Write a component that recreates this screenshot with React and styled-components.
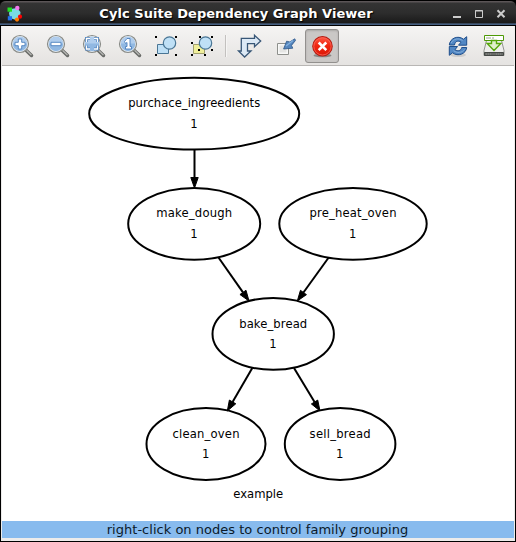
import React from 'react';
import styled, { createGlobalStyle, css } from 'styled-components';

const GlobalStyle = createGlobalStyle`
  body { margin: 0; background: #000; }
  * { box-sizing: border-box; }
`;

const Window = styled.div`
  width: 516px;
  height: 542px;
  display: flex;
  flex-direction: column;
  background: #000;
  font-family: 'DejaVu Sans', sans-serif;
  overflow: hidden;
`;

const TitleBar = styled.header`
  height: 26px;
  flex: none;
  display: flex;
  align-items: center;
  padding: 0 8px 0 6px;
  border-top: 1px solid #000;
  border-bottom: 1px solid #000;
  border-radius: 6px 6px 0 0;
  background: linear-gradient(#5b5557 0, #5b5557 1px, #343434 2px, #2d2d2d 12px, #1a1a1a 22px, #54739c 23px, #354965 24px);
`;

const Title = styled.h1`
  flex: 1;
  margin: 0;
  padding: 1px 6px 0 0;
  text-align: center;
  color: #fff;
  font-size: 13px;
  line-height: 20px;
  font-weight: bold;
  letter-spacing: 0.05px;
  white-space: nowrap;
  text-shadow: 1px 1px 1px #000;
`;

const Glyph = styled.svg`
  display: block;
  flex: none;
  overflow: visible;
`;

const Client = styled.div`
  flex: 1;
  min-height: 0;
  display: flex;
  flex-direction: column;
  margin: 0 1px 1px;
  border: solid #edeceb;
  border-width: 0 1px 3px 1px;
  background: #fff;
`;

const Toolbar = styled.nav`
  height: 40px;
  flex: none;
  display: flex;
  align-items: center;
  padding: 0 2px;
  background: linear-gradient(#f5f4f3, #e5e3e1);
  border-bottom: 1px solid #b8b6b4;
`;

const ToolButton = styled.button`
  width: 34px;
  height: 34px;
  margin: 0 1px;
  padding: 0;
  display: flex;
  align-items: center;
  justify-content: center;
  border: 1px solid transparent;
  border-radius: 3px;
  background: transparent;
  ${(p) => p.$pressed && css`
    border-color: #92908e;
    background: #cac8c6;
    box-shadow: inset 0 1px 2px #aaa8a6;
  `}
`;

const Separator = styled.div`
  width: 2px;
  height: 22px;
  margin: 0 5px;
  background: #c3c1bf;
  border-right: 1px solid #f6f5f4;
`;

const Spacer = styled.div`flex: 1;`;

const Canvas = styled.main`
  flex: 1;
  min-height: 0;
  background: #fff;
`;

const StatusBar = styled.footer`
  height: 17px;
  flex: none;
  background: #88bbee;
  color: #0b1a2a;
  text-align: center;
  font-size: 13px;
  line-height: 17px;
  letter-spacing: 0.02px;
  padding-right: 1px;
  white-space: nowrap;
`;

const AppIcon = () => (
  <Glyph width="18" height="18" viewBox="0 0 18 18">
    <path d="M5 5 11 4 14.500 8 14 13 10 16 4 14 3 9Z" fill="#79dce4" />
    <rect x="1.500" y="3.500" width="4.500" height="4.200" fill="#1fe01f" />
    <circle cx="11.300" cy="4" r="2.200" fill="#f37af0" />
    <circle cx="14" cy="12.700" r="2.100" fill="#f00" />
    <circle cx="11" cy="15.600" r="2.100" fill="#ff7b00" />
    <rect x="1.800" y="12.200" width="4.200" height="4.200" fill="#2272ee" />
  </Glyph>
);

const WindowControls = () => (
  <Glyph width="54" height="12" viewBox="0 0 54 12">
    <path d="M-1 10h8" stroke="#ccc" strokeWidth="2" />
    <path d="M21.500 3.500h7v7h-7zM21 4h8" fill="none" stroke="#ccc" />
    <path d="m43.500 3.300 7 7m0-7-7 7" stroke="#ccc" strokeWidth="2" />
  </Glyph>
);

const magnifierMarks = {
  in: <path d="M8.300 4.500h3.400v3.300H15v3.400h-3.300v3.300H8.300v-3.300H5V7.800h3.300z" />,
  out: <path d="M5 7.800h10v3.400H5z" />,
  fit: (
    <g fill="none">
      <path d="M4.500 7.500v-3.500H8M12 4h3.500v3.500M15.500 11v3.500H12M8 14.500H4.500V11" stroke="#4c80bd" strokeWidth="2.800" />
      <path d="M4.500 7.500v-3.500H8M12 4h3.500v3.500M15.500 11v3.500H12M8 14.500H4.500V11" stroke="#fff" strokeWidth="1.300" />
    </g>
  ),
  one: <path d="M6.500 7 9 4h3v8h1.500v2.500h-6V12H9V8L7.500 9z" />,
};

const Magnifier = ({ kind }) => (
  <Glyph width="24" height="24" viewBox="0 0 24 24">
    <path d="m16 16.300 5.500 5.200" stroke="#686a67" strokeWidth="3.500" strokeLinecap="round" />
    <path d="m16.500 16.300 5 4.800" stroke="#b9bab7" strokeWidth="1.300" />
    <circle cx="10" cy="10" r="8.500" fill="#e9f0f7" stroke="#898b87" strokeWidth="1.200" />
    <circle cx="10" cy="10" r="7.200" fill="#91b8e2" />
    <path d="M2.800 9.500a7.200 6.700 0 0 1 14.400 0z" fill="#b0cded" />
    <g transform="translate(0 .5)" fill="#fff" stroke="#4c80bd" strokeWidth=".9">{magnifierMarks[kind]}</g>
  </Glyph>
);

const corners = (points) => points.map(([x, y]) => (
  <rect key={`${x}-${y}`} x={x} y={y} width="2" height="2" fill="#000" />
));

const GroupIcon = () => (
  <Glyph width="24" height="24" viewBox="0 0 24 24">
    <path d="M3.500 10.500h11v9h-11z" fill="#bfe0f6" stroke="#4a7695" />
    <circle cx="15.500" cy="9" r="6.200" fill="#bfe0f6" stroke="#4a7695" strokeWidth="1.200" />
    {corners([[1, 2], [21, 2], [1, 20], [21, 20]])}
  </Glyph>
);

const UngroupIcon = () => (
  <Glyph width="24" height="24" viewBox="0 0 24 24">
    <path d="M3.500 10.500h11v9h-11z" fill="#f0ef9b" stroke="#a2a170" />
    <circle cx="15.500" cy="9" r="6.200" fill="#bfe0f6" stroke="#4a7695" strokeWidth="1.200" />
    {corners([[9, 2], [21, 2], [1, 8], [21, 15], [8, 15], [1, 20], [14, 20]])}
  </Glyph>
);

const BranchIcon = () => (
  <Glyph width="24" height="24" viewBox="0 0 24 24">
    <path d="M3.300 4.300h13.200V1.300l6.200 5.700-6.200 5.700v-3h-7V17H13l-6.400 6L.5 17h2.800z" fill="#dce9f5" stroke="#385777" strokeWidth="1.300" />
  </Glyph>
);

const ShrinkIcon = () => (
  <Glyph width="24" height="24" viewBox="0 0 24 24">
    <path d="M3.500 9.500h11v11h-11z" fill="#f8f8f7" stroke="#8e908c" />
    <path d="M5.500 11.500h7v7h-7z" fill="#e5e5e3" />
    <path d="m20.800 4.800-5 3.100-3.200-.7-3 7.800 9.200-.8-1.300-2.800 4-5z" fill="#5485bd" stroke="#2d5789" strokeWidth=".8" />
    <path d="m19 6.500-7 5.500" stroke="#83b1df" strokeWidth="1.400" />
  </Glyph>
);

const StopIcon = () => (
  <Glyph width="24" height="24" viewBox="0 0 24 24">
    <defs>
      <linearGradient id="stop" x2="0" y2="1">
        <stop stopColor="#ff5b48" />
        <stop offset=".48" stopColor="#ef250f" />
        <stop offset="1" stopColor="#da1807" />
      </linearGradient>
    </defs>
    <ellipse cx="12.500" cy="21.500" rx="9" ry="1.800" fill="#898785" />
    <circle cx="12.500" cy="12.300" r="9.700" fill="url(#stop)" stroke="#b51d12" strokeWidth="1.200" />
    <circle cx="12.500" cy="12.300" r="8.700" fill="none" stroke="#ff6759" strokeWidth=".8" />
    <path d="m8.700 8.500 7.600 7.600m0-7.600-7.600 7.600" stroke="#fff" strokeWidth="2.600" />
  </Glyph>
);

const RefreshIcon = () => (
  <Glyph width="24" height="24" viewBox="0 0 24 24">
    <ellipse cx="12" cy="21" rx="8" ry="2" fill="#cfcecd" />
    <g fill="#5187c4" stroke="#1f4e8b" strokeWidth="1">
      <path d="M3.300 11C4 4 12 1 17.500 5.200l3.200-2.500v8.500h-8.200l2.500-3C12 6 9 7.300 8.500 11z" />
      <path d="M20.700 13.500C20 20 12 23 6.500 18.800l-3.200 2.500v-8.800h8.200L9 15.700c3 2 6 1 6.700-2.200z" />
    </g>
    <path d="M5.200 9C7.500 4.500 13 3.800 16.500 6.500M18.500 15.500c-2.500 3.500-7.500 4-11 1.200" fill="none" stroke="#84add8" />
  </Glyph>
);

const SaveIcon = () => (
  <Glyph width="24" height="24" viewBox="0 0 24 24">
    <path d="M4.500 6.500h15l2.500 10v5H2v-5z" fill="#eeeeec" stroke="#91938f" />
    <path d="M2.500 18.500h19v3h-19z" fill="#686b68" stroke="#454845" />
    <path d="M4 20h5m5 0h6" stroke="#8b8d89" strokeDasharray="1 1" strokeWidth="1" />
    <path d="M2.500 1.500h19v5h-19z" fill="#fff" stroke="#4e9a06" />
    <path d="M4 4h5m2 -1v2" stroke="#99a48f" />
    <path d="M9.500 6.500h5v3h4.300L12 16.500 5.200 9.500h4.300z" fill="#dff0cb" stroke="#55a60a" strokeWidth="1.400" />
  </Glyph>
);

const leftTools = [
  ['Zoom in', <Magnifier kind="in" />],
  ['Zoom out', <Magnifier kind="out" />],
  ['Zoom to fit', <Magnifier kind="fit" />],
  ['Zoom 100%', <Magnifier kind="one" />],
  ['Group all', <GroupIcon />],
  ['Ungroup all', <UngroupIcon />],
];

const viewTools = [
  ['Landscape', <BranchIcon />],
  ['Crop', <ShrinkIcon />],
  ['Ignore suicide triggers', <StopIcon />, true],
];

const rightTools = [
  ['Refresh', <RefreshIcon />],
  ['Save', <SaveIcon />],
];

const renderTools = (tools) => tools.map(([label, icon, pressed]) => (
  <ToolButton key={label} aria-label={label} $pressed={pressed}>{icon}</ToolButton>
));

const NodeShape = styled.ellipse`
  fill: #fff;
  stroke: #000;
  stroke-width: 2;
`;

const NodeLabel = styled.text`
  font: 11.6px 'DejaVu Sans', sans-serif;
  text-anchor: middle;
  fill: #000;
`;

const Edge = styled.path`
  fill: none;
  stroke: #000;
  stroke-width: 2;
`;

const nodes = [
  { name: 'purchace_ingreedients', x: 194.2, y: 113.7, rx: 105, width: 132 },
  { name: 'make_dough', x: 194.2, y: 223.8, rx: 66, width: 76 },
  { name: 'pre_heat_oven', x: 353, y: 223.8, rx: 73.7, width: 87 },
  { name: 'bake_bread', x: 273.2, y: 333.9, rx: 60.7, width: 68 },
  { name: 'clean_oven', x: 206, y: 444, rx: 59.5, width: 67 },
  { name: 'sell_bread', x: 340.1, y: 444, rx: 55.3, width: 61 },
];

const edges = [
  [194.5, 150, 194.5, 188],
  [218.5, 257.5, 249, 301],
  [328.7, 257.5, 297.3, 301],
  [252.3, 368, 227.3, 411],
  [294, 368, 320, 411],
];

const Arrow = ({ from: [x1, y1, x2, y2] }) => {
  const length = Math.hypot(x2 - x1, y2 - y1);
  const ux = (x2 - x1) / length;
  const uy = (y2 - y1) / length;
  const bx = x2 - ux * 10.5;
  const by = y2 - uy * 10.5;
  return (
    <>
      <Edge d={`M${x1} ${y1}L${bx} ${by}`} />
      <path
        d={`M${x2} ${y2}L${bx - uy * 3.7} ${by + ux * 3.7}L${bx + uy * 3.7} ${by - ux * 3.7}Z`}
        stroke="#000"
        strokeWidth="1"
      />
    </>
  );
};

const Graph = () => (
  <Glyph width="512" height="455" viewBox="2 66 512 455">
    {nodes.map(({ name, x, y, rx, width }) => (
      <g key={name}>
        <NodeShape cx={x} cy={y} rx={rx} ry="35.900" />
        <NodeLabel x={x} y={y < 300 ? Math.round(y) - 7 : Math.round(y) - 6} textLength={width}>{name}</NodeLabel>
        <NodeLabel x={x - 0.3} y={Math.round(y) + 14}>1</NodeLabel>
      </g>
    ))}
    {edges.map((edge) => <Arrow key={edge.join()} from={edge} />)}
    <NodeLabel x="258.200" y="498" textLength="50">example</NodeLabel>
  </Glyph>
);

export default function App() {
  return (
    <>
      <GlobalStyle />
      <Window>
        <TitleBar>
          <AppIcon />
          <Title>Cylc Suite Dependency Graph Viewer</Title>
          <WindowControls />
        </TitleBar>
        <Client>
          <Toolbar>
            {renderTools(leftTools)}
            <Separator />
            {renderTools(viewTools)}
            <Spacer />
            {renderTools(rightTools)}
          </Toolbar>
          <Canvas><Graph /></Canvas>
          <StatusBar>right-click on nodes to control family grouping</StatusBar>
        </Client>
      </Window>
    </>
  );
}
